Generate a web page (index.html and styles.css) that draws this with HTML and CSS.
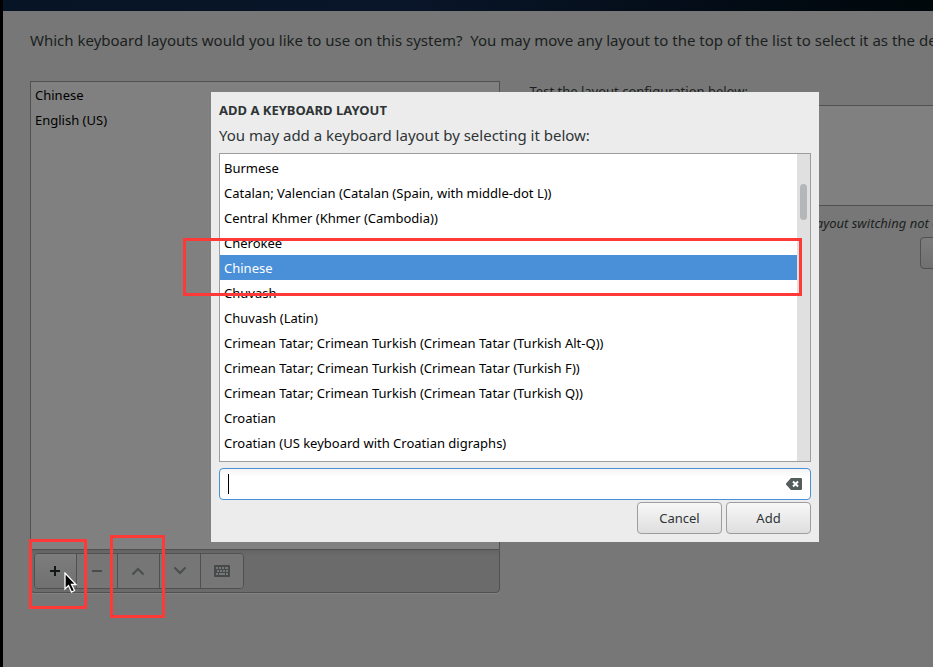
FILE: index.html
```html
<!DOCTYPE html>
<html lang="en">
<head>
<meta charset="utf-8">
<title>Keyboard Layout</title>
<link rel="stylesheet" href="styles.css">
</head>
<body>
<div class="banner"></div>
<main class="page">
  <p class="intro">Which keyboard layouts would you like to use on this system?&nbsp; You may move any layout to the top of the list to select it as the default.</p>
  <div class="columns">
    <section class="layouts">
      <ul class="layout-list">
        <li>Chinese</li>
        <li>English (US)</li>
      </ul>
      <div class="toolbar">
        <div class="button-group">
          <button class="tool active" aria-label="Add layout"><svg width="16" height="16" viewBox="0 0 16 16"><path d="M3 8h10M8 3v10" stroke="#141718" stroke-width="2"/></svg></button>
          <button class="tool" aria-label="Remove layout"><svg width="16" height="16" viewBox="0 0 16 16"><path d="M3 8h10" stroke="#4a4d4d" stroke-width="2"/></svg></button>
          <button class="tool" aria-label="Move up"><svg width="16" height="16" viewBox="0 0 16 16"><path d="M2.500 11.500L8 6l5.500 5.500" fill="none" stroke="#4a4d4d" stroke-width="2"/></svg></button>
          <button class="tool" aria-label="Move down"><svg width="16" height="16" viewBox="0 0 16 16"><path d="M2.500 4.500L8 10l5.500-5.500" fill="none" stroke="#4a4d4d" stroke-width="2"/></svg></button>
          <button class="tool" aria-label="Preview layout"><svg width="16" height="16" viewBox="0 0 16 16"><rect y="2" width="16" height="12" rx="1" fill="#474a4a"/><path d="M2 5h2m1 0h2m1 0h2m1 0h3M3 8h2m1 0h2m1 0h2m1 0h2M2 11h2m1 0h6m1 0h2" stroke="#777" stroke-width="2"/></svg></button>
        </div>
      </div>
    </section>
    <section class="testing">
      <label class="test-label" for="test">Test the layout configuration below:</label>
      <textarea id="test" class="test-area"></textarea>
      <p class="switching">Layout switching not configured.</p>
      <button class="options">Options</button>
    </section>
  </div>
</main>

<div class="dialog" role="dialog" aria-labelledby="dialog-title">
  <h1 class="dialog-title" id="dialog-title">ADD A KEYBOARD LAYOUT</h1>
  <label class="dialog-text" for="filter">You may add a keyboard layout by selecting it below:</label>
  <div class="picker">
    <ul class="choices">
      <li>Burmese</li>
      <li>Catalan; Valencian (Catalan (Spain, with middle-dot L))</li>
      <li>Central Khmer (Khmer (Cambodia))</li>
      <li>Cherokee</li>
      <li class="selected">Chinese</li>
      <li>Chuvash</li>
      <li>Chuvash (Latin)</li>
      <li>Crimean Tatar; Crimean Turkish (Crimean Tatar (Turkish Alt-Q))</li>
      <li>Crimean Tatar; Crimean Turkish (Crimean Tatar (Turkish F))</li>
      <li>Crimean Tatar; Crimean Turkish (Crimean Tatar (Turkish Q))</li>
      <li>Croatian</li>
      <li>Croatian (US keyboard with Croatian digraphs)</li>
    </ul>
    <div class="scrollbar"><div class="thumb"></div></div>
  </div>
  <div class="entry">
    <span class="caret"></span>
    <input id="filter" type="text">
    <button class="clear" aria-label="Clear"><svg width="16" height="12" viewBox="0 0 16 12"><path d="M5 0h10q1 0 1 1v10q0 1-1 1H5L0 6.500v-1z" fill="#555c5c"/><path d="M7 3.500l5 5m0-5l-5 5" stroke="#fff" stroke-width="2"/></svg></button>
  </div>
  <div class="actions">
    <button>Cancel</button>
    <button>Add</button>
  </div>
</div>

<div class="mark mark-choice"></div>
<div class="mark mark-add"></div>
<div class="mark mark-up"></div>
<svg class="pointer" width="14" height="22" viewBox="0 0 14 22"><path d="M1 1v16l3.500-3.500 3 6.500 3-1.500-3-6H12z" fill="#000" stroke="#fff" stroke-width="1.300"/></svg>
</body>
</html>
```
FILE: styles.css
```css
* { box-sizing: border-box; }
html { height: 100%; }
body {
  margin: 0;
  min-height: 100%;
  border-left: 3px solid #000;
  background: #777;
  color: #1b1f20;
  font-family: "Noto Sans", sans-serif;
  font-size: 13px;
  overflow: hidden;
  position: relative;
}
ul { list-style: none; margin: 0; padding: 0; }
p, h1 { margin: 0; }
button, input, textarea { font: inherit; }
svg { display: block; }

.banner { height: 11px; background: linear-gradient(90deg, #071426, #091528 45%, #020a12 85%, #01080b); }
.page { padding: 17px 0 0 27px; }
.intro { font-size: 15px; line-height: 24px; white-space: nowrap; }
.columns { display: grid; grid-template-columns: 52% 52%; gap: 30px; margin-top: 29px; }

.layout-list {
  height: 468px;
  padding: 1px 4px;
  border: 1px solid #505050;
  border-bottom: 0;
  background: #808080;
  color: #000;
}
.layout-list li { line-height: 25px; }
.toolbar {
  padding: 3px;
  border: 1px solid #505050;
  border-radius: 0 0 4px 4px;
  background: linear-gradient(#646464, #6b6b6b 6px);
  box-shadow: 0 1px #828282;
}
.button-group {
  display: inline-grid;
  grid-template-columns: repeat(5, 1fr);
  width: 210px;
  vertical-align: top;
  border: 1px solid #505050;
  border-radius: 4px;
  overflow: hidden;
}
.tool {
  display: grid;
  place-items: center;
  height: 34px;
  padding: 0 0 1px;
  border: 0;
  border-right: 1px solid #505050;
  background: #767676;
}
.tool:last-child { border-right: 0; }
.tool.active { background: linear-gradient(#7d7d7d, #707070); }

.testing { display: flex; flex-direction: column; align-items: flex-start; white-space: nowrap; }
.test-label { margin-top: -2px; padding-bottom: 2px; line-height: 24px; }
.test-area {
  width: 100%;
  height: 101px;
  border: 1px solid #505050;
  background: #808080;
  resize: none;
}
.switching { margin-top: 5px; line-height: 24px; font-style: italic; padding-left: 280px; }
.options {
  height: 32px;
  width: 84px;
  margin: 2px 0 0 390px;
  border: 1px solid #505050;
  border-radius: 4px;
  background: linear-gradient(#7d7d7d, #707070);
}

.dialog {
  position: absolute;
  top: 92px;
  left: 208px;
  width: 608px;
  padding: 8px;
  background: #ececec;
  color: #2e3436;
}
.dialog-title { font-size: 13px; line-height: 20px; }
.dialog-text { display: block; font-size: 15px; line-height: 30px; }
.picker { display: flex; margin-top: 3px; border: 1px solid #9d9d9d; background: #fff; }
.choices { flex: 1; padding: 1px 0 6px; color: #000; }
.choices li { padding: 2px 0 0 4px; line-height: 23px; }
.choices .selected { background: #4a90d9; color: #fff; }
.scrollbar { width: 13px; padding: 30px 3px 0; background: #e0e0e0; }
.thumb { height: 36px; border-radius: 4px; background: #b4b6b8; }

.entry {
  display: flex;
  align-items: center;
  height: 32px;
  margin-top: 6px;
  padding: 0 8px;
  border: 1px solid #4a90d9;
  border-radius: 4px;
  background: linear-gradient(#f4f4f4, #fff 8px);
}
.caret { width: 1px; height: 20px; background: #000; }
.entry input { flex: 1; border: 0; outline: 0; background: none; }
.clear { padding: 0; border: 0; background: none; }
.actions { display: flex; justify-content: flex-end; gap: 4px; margin-top: 2px; }
.actions button {
  width: 85px;
  height: 32px;
  border: 1px solid #9d9d9d;
  border-radius: 4px;
  background: linear-gradient(#f8f8f8, #dedede);
  color: #2e3436;
}

.mark { position: absolute; border: 3px solid #ff3838; pointer-events: none; }
.mark-choice { left: 180px; top: 238px; width: 619px; height: 58px; }
.mark-add { left: 26px; top: 539px; width: 58px; height: 70px; }
.mark-up { left: 107px; top: 535px; width: 55px; height: 83px; }
.pointer { position: absolute; left: 61px; top: 572px; }
```
